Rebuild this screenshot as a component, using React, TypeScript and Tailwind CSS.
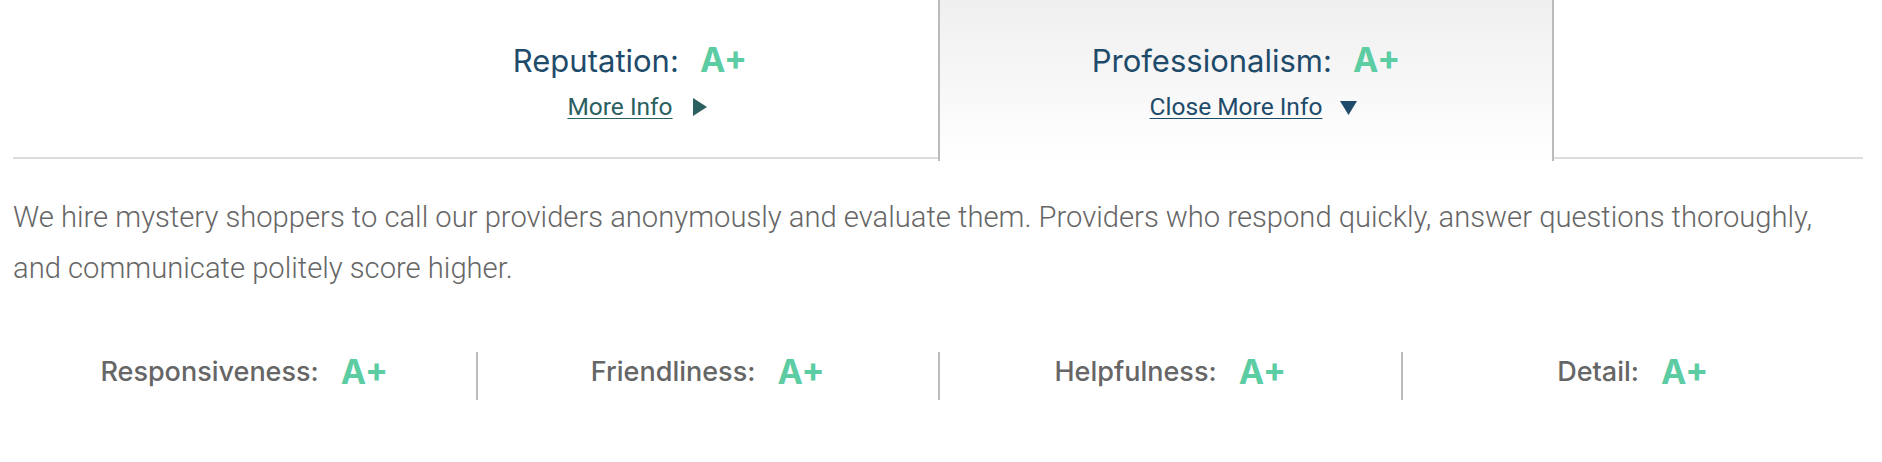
const subScores = [
  { label: 'Responsiveness:', grade: 'A+' },
  { label: 'Friendliness:', grade: 'A+' },
  { label: 'Helpfulness:', grade: 'A+' },
  { label: 'Detail:', grade: 'A+' },
];

function Grade({ value, className = '' }: { value: string; className?: string }) {
  return (
    <span className={`font-['Inter',sans-serif] font-bold text-[34px] leading-[34px] text-[#5ccca2] ${className}`}>{value}</span>
  );
}

export default function App() {
  return (
    <div className="w-[1850px] ml-[13px] bg-white font-['Roboto',sans-serif]">
      {/* score tabs */}
      <div className="flex h-[159px] border-b-2 border-[#dddddd]">
        <div className="w-[309px]" />
        <div className="w-[616px] flex flex-col items-center pt-[43px]">
          <div className="flex items-baseline">
            <span className="font-['Inter',sans-serif] text-[31px] leading-[34px] text-[#1f4b6b]">Reputation:</span>
            <Grade value="A+" className="ml-[21px]" />
          </div>
          <div className="relative mt-[15px] mr-[20px] text-[24.5px] leading-[28px] text-[#2c5f5f]">
            <a href="#" className="underline underline-offset-[3px] decoration-1">More Info</a>
            <svg viewBox="0 0 14 18" className="absolute left-full top-[5px] ml-[20px] w-[14px] h-[18px]">
              <path d="M0 0 L14 9 L0 18 Z" fill="#2c5f5f" />
            </svg>
          </div>
        </div>
        <div className="w-[616px] h-[161px] -mb-[2px] border-x-2 border-[#bbbbbb] bg-gradient-to-b from-[#efefef] to-white flex flex-col items-center pt-[43px]">
          <div className="flex items-baseline">
            <span className="font-['Inter',sans-serif] text-[31px] leading-[34px] text-[#1f4b6b]">Professionalism:</span>
            <Grade value="A+" className="ml-[21px]" />
          </div>
          <div className="relative mt-[15px] mr-[20px] text-[24.5px] leading-[28px] text-[#1f4b6b]">
            <a href="#" className="underline underline-offset-[3px] decoration-1">Close More Info</a>
            <svg viewBox="0 0 17 14" className="absolute left-full top-[8px] ml-[18px] w-[17px] h-[14px]">
              <path d="M0 0 L17 0 L8.5 14 Z" fill="#1f4b6b" />
            </svg>
          </div>
        </div>
        <div className="flex-1" />
      </div>

      {/* description */}
      <p className="mt-[33px] text-[29.2px] leading-[51px] font-light text-[#666666] pr-[20px]">
        We hire mystery shoppers to call our providers anonymously and evaluate them. Providers who respond quickly, answer questions thoroughly, and communicate politely score higher.
      </p>

      {/* sub scores */}
      <div className="mt-[58px] grid grid-cols-4">
        {subScores.map((s, i) => (
          <div
            key={s.label}
            className={`h-[48px] flex items-center justify-center pb-[8px] ${i > 0 ? 'border-l-2 border-[#bbbbbb]' : ''}`}
          >
            <span className="font-['Inter',sans-serif] font-medium text-[27px] leading-[34px] text-[#666666]">{s.label}</span>
            <Grade value={s.grade} className="ml-[22px]" />
          </div>
        ))}
      </div>
    </div>
  );
}
